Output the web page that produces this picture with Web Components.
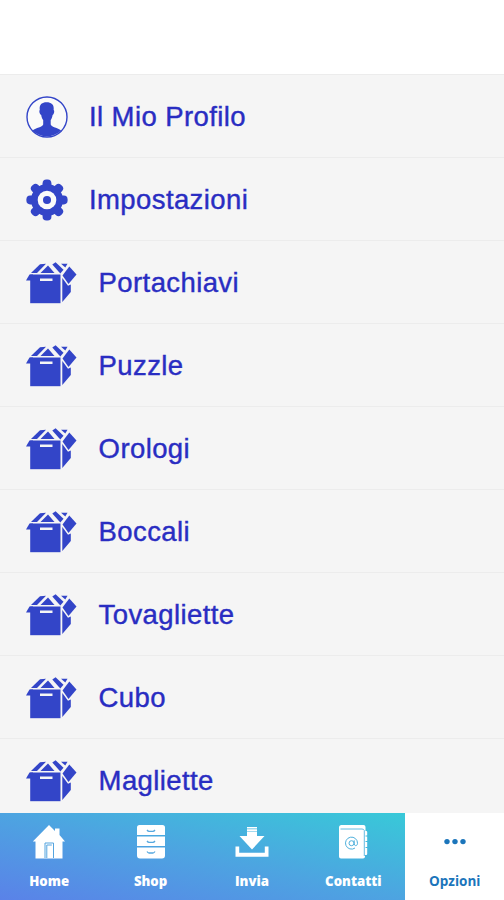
<!DOCTYPE html>
<html lang="it">
<head>
<meta charset="utf-8">
<title>Opzioni</title>
<style>
    :root {
        --menu-color: #3345c8;
        --text-color: #292dc2;
        --row-color: #f5f5f5;
        --line-color: #ececec;
        --accent-color: #1b75bb;
    }
    body {
        margin: 0;
        background: #fff;
        font-family: "Liberation Sans", Arial, sans-serif;
    }
</style>
</head>
<body>
<options-page>
    <menu-row icon="profile">Il Mio Profilo</menu-row>
    <menu-row icon="gear">Impostazioni</menu-row>
    <menu-row icon="box">Portachiavi</menu-row>
    <menu-row icon="box">Puzzle</menu-row>
    <menu-row icon="box">Orologi</menu-row>
    <menu-row icon="box">Boccali</menu-row>
    <menu-row icon="box">Tovagliette</menu-row>
    <menu-row icon="box">Cubo</menu-row>
    <menu-row icon="box">Magliette</menu-row>
    <tab-bar slot="tabs">
        <tab-item icon="home">Home</tab-item>
        <tab-item icon="shop">Shop</tab-item>
        <tab-item icon="send">Invia</tab-item>
        <tab-item icon="contacts">Contatti</tab-item>
        <tab-item icon="dots" active>Opzioni</tab-item>
    </tab-bar>
</options-page>

<script>
const tooth = '<rect x="16.6" y="0.4" width="8.8" height="12" rx="3.8"/>';
const teeth = [0, 45, 90, 135, 180, 225, 270, 315]
    .map(a => `<g transform="rotate(${a} 21 21)">${tooth}</g>`).join('');

const menuIcons = {
    profile: `
        <svg width="42" height="42" viewBox="0 0 42 42">
            <circle cx="21" cy="21" r="20" fill="#fafafa" stroke="currentColor" stroke-width="1.4"/>
            <path fill="currentColor" d="M13.800 14C13 9 15.500 6.200 20.500 6.200c5.500 0 7.800 3 7.100 7.800 1.200.6.500 4.500-1 5-.4 2.500-1.100 4-1.900 5v4.500c1.200 3 6.800 3 10.400 5.900A20 20 0 0 1 6.600 34.400c3.600-2.900 9.400-2.900 10.600-5.900V24c-.9-1-1.600-2.500-2-5-1.500-.5-2.500-4.400-1.400-5z"/>
        </svg>`,
    gear: `
        <svg width="42" height="42" viewBox="0 0 42 42" fill="currentColor">
            ${teeth}
            <circle cx="21" cy="21" r="16"/>
            <circle cx="21" cy="21" r="9.300" fill="#fafafa"/>
            <circle cx="21" cy="21" r="4"/>
        </svg>`,
    box: `
        <svg width="51" height="42" viewBox="0 0 51 42" fill="currentColor">
            <path d="M4.200 12.500h30.300v28.700H4.200z"/>
            <path d="M3.500 12.500h3.500V18.500H0z"/>
            <path d="M5 11 14 2.300 20 1.800 11 11z"/>
            <path d="M14.500 11 22 3.500 28.500 11z"/>
            <path d="M26.300 2.500 29.600.2 37.500 7.800 34.300 11.500z"/>
            <path d="M35 1.800h6.500L39.300 5.500z"/>
            <path d="M36.500 13.500 43.300 4.500 50.500 12.500 42.500 22z"/>
            <path d="M36.300 16 42 23.800 44.800 22.500V30L36.300 40z"/>
            <path d="M14 16.500h12.500V19H14z" fill="#f5f5f5"/>
        </svg>`
};

const tabIcons = {
    home: `
        <svg width="34" height="36" viewBox="0 0 34 36">
            <path fill="#fff" d="M17 1 23 7V4.500h4.500V11L33 17.500H30.500V34.500H3.500v-17H.8z"/>
            <path fill="none" stroke="#55a4df" d="M13 34V19h8.500v15M14.800 34V21h5"/>
        </svg>`,
    shop: `
        <svg width="34" height="36" viewBox="0 0 34 36">
            <path fill="#fff" d="M5.500 1h23a2.500 2.500 0 0 1 2.500 2.500V11H3V3.500A2.500 2.500 0 0 1 5.500 1zM3 12.500h28V22H3zM3 23.500h28v8a3 3 0 0 1-3 3H6a3 3 0 0 1-3-3z"/>
            <path fill="none" stroke="#55a8df" stroke-width="1.300" d="M13 6q1 1.300 2 1.300h4q1 0 2-1.300M13 17q1 1.300 2 1.300h4q1 0 2-1.300M13 27.500q1 1.500 2 1.500h4q1 0 2-1.500"/>
        </svg>`,
    send: `
        <svg width="34" height="36" viewBox="0 0 34 36" fill="#fff">
            <path d="M12 3h10v1.500H12zM12 5.200h10v1.800H12zM12 7.600h10V12h7.500L17 25.500 4.500 12H12z"/>
            <path d="M.5 22.500h3.700v6.300h25.600v-6.300h3.700v10.300H.5z"/>
        </svg>`,
    contacts: `
        <svg width="34" height="36" viewBox="0 0 34 36">
            <path fill="#fff" d="M5.500 1h22a2 2 0 0 1 2 2v4h.7a1 1 0 0 1 1 1v3.500H29.500v1h1.700V17H29.500v1h1.700v5H29.500v1h1.700v6a1 1 0 0 1-1 1H29v1.500a2 2 0 0 1-2 2H5a2 2 0 0 1-2-2V3.500A2.500 2.500 0 0 1 5.500 1z"/>
            <path fill="none" stroke="#55b4df" stroke-width=".9" d="M4.500 5H26q1.800 0 2.300 1.500V32"/>
            <g fill="none" stroke="#4fb0dc">
                <path d="M19 24a6 6 0 1 1 2.500-4.700c0 3-3.300 3-3.300.5V16.300"/>
                <circle cx="15.500" cy="19.200" r="2.500"/>
            </g>
        </svg>`,
    dots: `
        <svg width="34" height="36" viewBox="0 0 34 36" fill="#1b75bb">
            <circle cx="9" cy="17.600" r="2.700"/>
            <circle cx="17" cy="17.600" r="2.700"/>
            <circle cx="25" cy="17.600" r="2.700"/>
        </svg>`
};

class OptionsPage extends HTMLElement {
    constructor() {
        super();
        this.attachShadow({ mode: 'open' });
    }

    connectedCallback() {
        this.shadowRoot.innerHTML = `
            <style>
                :host {
                    display: flex;
                    flex-direction: column;
                    height: 900px;
                    overflow: hidden;
                }
                header {
                    flex: none;
                    height: 74px;
                    background: #fff;
                }
                main {
                    flex: 1;
                    min-height: 0;
                    overflow: hidden;
                    background: var(--row-color);
                }
            </style>
            <header></header>
            <main><slot></slot></main>
            <slot name="tabs"></slot>
            `;
    }
}

class MenuRow extends HTMLElement {
    constructor() {
        super();
        this.attachShadow({ mode: 'open' });
    }

    connectedCallback() {
        const icon = this.getAttribute('icon');
        this.shadowRoot.innerHTML = `
            <style>
                :host {
                    display: flex;
                    align-items: center;
                    gap: 21px;
                    box-sizing: border-box;
                    height: 83px;
                    padding: 2px 26px 0;
                    border-top: 1px solid var(--line-color);
                    color: var(--menu-color);
                }
                :host([icon="box"]) {
                    gap: 21.6px;
                }
                svg {
                    display: block;
                    flex: none;
                }
                span {
                    color: var(--text-color);
                    font-size: 27.5px;
                    line-height: 32px;
                    letter-spacing: 0.4px;
                    white-space: nowrap;
                    -webkit-text-stroke: 0.4px var(--text-color);
                }
            </style>
            ${menuIcons[icon]}
            <span><slot></slot></span>
            `;
    }
}

class TabBar extends HTMLElement {
    constructor() {
        super();
        this.attachShadow({ mode: 'open' });
    }

    connectedCallback() {
        this.shadowRoot.innerHTML = `
            <style>
                :host {
                    display: grid;
                    grid-template-columns: repeat(5, 101.4px);
                    flex: none;
                    height: 87px;
                    margin-left: -1px;
                    background: linear-gradient(to top right, #5a82e8, #4da4e1 50%, #38c9d8) 0 0 / 407px 100% no-repeat;
                }
            </style>
            <slot></slot>
            `;
    }
}

class TabItem extends HTMLElement {
    constructor() {
        super();
        this.attachShadow({ mode: 'open' });
    }

    connectedCallback() {
        const icon = this.getAttribute('icon');
        this.shadowRoot.innerHTML = `
            <style>
                :host {
                    display: flex;
                    flex-direction: column;
                    align-items: center;
                    gap: 11px;
                    padding-top: 11px;
                    padding-right: 1px;
                    color: #fff;
                }
                :host([active]) {
                    background: #fff;
                    color: var(--accent-color);
                }
                svg {
                    display: block;
                }
                span {
                    font: 800 13.2px/20px "Open Sans", sans-serif;
                }
                :host([active]) span {
                    font-weight: 700;
                    font-size: 13.5px;
                }
            </style>
            ${tabIcons[icon]}
            <span><slot></slot></span>
            `;
    }
}

customElements.define('options-page', OptionsPage);
customElements.define('menu-row', MenuRow);
customElements.define('tab-bar', TabBar);
customElements.define('tab-item', TabItem);
</script>
</body>
</html>
